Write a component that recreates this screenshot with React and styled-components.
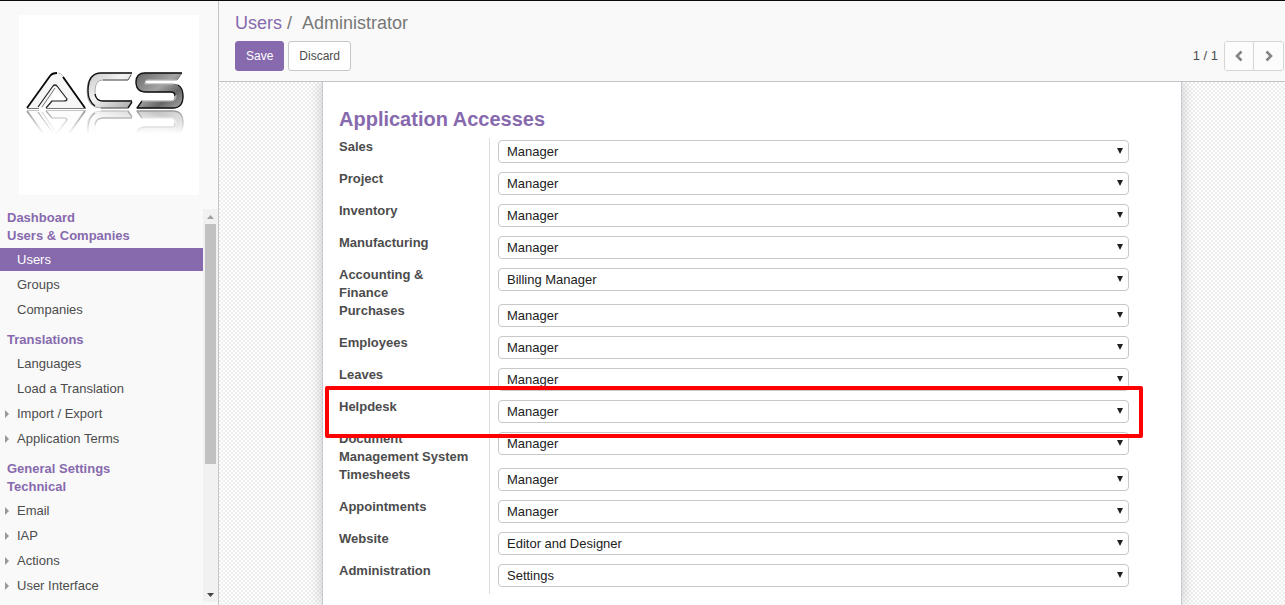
import React from "react";
import styled, { createGlobalStyle, css } from "styled-components";

const purple = "#8769ae";
const line = "#c3c3c8";

const GlobalStyle = createGlobalStyle`
  *, *::before, *::after { box-sizing: border-box; }
  body {
    margin: 0;
    font: 13px/18px "Liberation Sans", Arial, sans-serif;
    color: #4c4c4c;
    background: #fff;
  }
`;

const Page = styled.div`
  display: flex;
  height: 100vh;
  overflow: hidden;
  border-top: 1px solid #0b0b0b;
`;

const Sidebar = styled.aside`
  display: flex;
  flex-direction: column;
  flex: none;
  width: 219px;
  padding-bottom: 3px;
  background: #f9f9f9;
  border-right: 1px solid ${line};
`;

const LogoLink = styled.a`
  flex: none;
  align-self: center;
  width: 180px;
  height: 180px;
  margin: 14px 0;
  background: #fff;
`;

const MenuArea = styled.div`
  display: flex;
  flex: 1;
  min-height: 0;
`;

const Menu = styled.nav`
  flex: 1;
  overflow: hidden;
`;

const MenuTitle = styled.h2`
  margin: 0;
  padding-left: 7px;
  font-size: 13px;
  line-height: 18px;
  color: ${purple};
`;

const MenuList = styled.ul`
  display: flex;
  flex-direction: column;
  gap: 2px;
  margin: 3px 0 10px;
  padding: 0;
  list-style: none;
`;

const MenuLink = styled.a`
  display: flex;
  align-items: center;
  height: 23px;
  color: #4c4c4c;
  text-decoration: none;
  ${(p) => p.$active && css`
    color: #fff;
    background: ${purple};
  `}
`;

const Caret = styled.span`
  display: flex;
  flex: none;
  width: 17px;
  padding-left: 5px;
`;

const ScrollTrack = styled.div`
  display: flex;
  flex-direction: column;
  align-items: center;
  flex: none;
  width: 15px;
  background: #f1f1f1;
`;

const ScrollArrow = styled.span`
  display: flex;
  align-items: center;
  justify-content: center;
  flex: none;
  width: 15px;
  height: 15px;
`;

const ScrollRail = styled.div`
  flex: 1;
  width: 11px;
`;

const ScrollThumb = styled.div`
  height: 66%;
  background: #c1c1c1;
`;

const Main = styled.main`
  display: flex;
  flex-direction: column;
  flex: 1;
  min-width: 0;
`;

const ControlPanel = styled.header`
  display: flex;
  flex-direction: column;
  gap: 6px;
  flex: none;
  padding: 10px 1px 10px 16px;
  background: #f9f9f9;
  border-bottom: 1px solid ${line};
`;

const Breadcrumb = styled.nav`
  display: flex;
  gap: 5px;
  font-size: 18px;
  line-height: 24px;
  color: #777;
`;

const BreadcrumbLink = styled.a`
  color: ${purple};
  text-decoration: none;
`;

const BreadcrumbCurrent = styled.span`
  padding-left: 5px;
`;

const Toolbar = styled.div`
  display: flex;
  align-items: center;
  gap: 4px;
`;

const Button = styled.button`
  height: 30px;
  padding: 0 10px;
  font: 12px/18px "Liberation Sans", Arial, sans-serif;
  color: ${(p) => (p.$primary ? "#fff" : "#4c4c4c")};
  background: ${(p) => (p.$primary ? purple : "#fff")};
  border: 1px solid ${(p) => (p.$primary ? purple : "#c8c8c8")};
  border-radius: 3px;
`;

const Pager = styled.div`
  display: flex;
  align-items: center;
  gap: 6px;
  margin-left: auto;
`;

const PagerButtons = styled.div`
  display: flex;
  overflow: hidden;
  border: 1px solid #d6d6d6;
  border-radius: 3px;
`;

const PagerButton = styled.button`
  display: flex;
  align-items: center;
  justify-content: center;
  width: 28px;
  height: 28px;
  padding: 0;
  background: #fcfcfc;
  border: 0;

  & + & {
    width: 30px;
    border-left: 1px solid #d6d6d6;
  }
`;

const Content = styled.div`
  display: flex;
  justify-content: center;
  flex: 1;
  min-height: 0;
  overflow: hidden;
  background: conic-gradient(#ededed 25%, #fff 0 50%, #ededed 0 75%, #fff 0) 0 0 / 4px 4px;
`;

const Sheet = styled.section`
  width: 100%;
  max-width: 860px;
  padding: 24px 52px 11px 16px;
  background: #fff;
  border: 1px solid #c8c8d3;
  border-width: 0 1px;
  box-shadow: 0 0 14px rgba(0, 0, 0, 0.2);
`;

const SheetTitle = styled.h1`
  margin: 0;
  padding-bottom: 6px;
  font-size: 20px;
  line-height: 26px;
  color: ${purple};
`;

const FieldRow = styled.div`
  position: relative;
  display: flex;
  min-height: 32px;
`;

const FieldLabel = styled.label`
  flex: none;
  width: 151px;
  padding-right: 18px;
  font-weight: bold;
  border-right: 1px solid #ddd;
`;

const SelectBox = styled.div`
  position: relative;
  flex: 1;
  height: 23px;
  margin: 2px 0 0 8px;
`;

const Select = styled.select`
  display: block;
  width: 100%;
  height: 23px;
  padding: 0 24px 0 8px;
  font: 13px/18px "Liberation Sans", Arial, sans-serif;
  color: #222;
  background: #fff;
  border: 1px solid #c8c8c8;
  border-radius: 4px;
  appearance: none;
`;

const SelectArrow = styled.svg`
  position: absolute;
  top: 8px;
  right: 6px;
  pointer-events: none;
`;

const Highlight = styled.div`
  position: absolute;
  z-index: 1;
  inset: -12px -14px -8px;
  border: 4px solid #fe0000;
  border-radius: 2px;
  pointer-events: none;
`;

const sections = [
  { title: "Dashboard" },
  {
    title: "Users & Companies",
    items: [{ name: "Users", active: true }, { name: "Groups" }, { name: "Companies" }],
  },
  {
    title: "Translations",
    items: [
      { name: "Languages" },
      { name: "Load a Translation" },
      { name: "Import / Export", nested: true },
      { name: "Application Terms", nested: true },
    ],
  },
  { title: "General Settings" },
  {
    title: "Technical",
    items: [
      { name: "Email", nested: true },
      { name: "IAP", nested: true },
      { name: "Actions", nested: true },
      { name: "User Interface", nested: true },
    ],
  },
];

const fields = [
  ["Sales", "Manager"],
  ["Project", "Manager"],
  ["Inventory", "Manager"],
  ["Manufacturing", "Manager"],
  ["Accounting & Finance", "Billing Manager"],
  ["Purchases", "Manager"],
  ["Employees", "Manager"],
  ["Leaves", "Manager"],
  ["Helpdesk", "Manager"],
  ["Document Management System", "Manager"],
  ["Timesheets", "Manager"],
  ["Appointments", "Manager"],
  ["Website", "Editor and Designer"],
  ["Administration", "Settings"],
];

function Logo() {
  return (
    <svg width="180" height="180" viewBox="0 0 180 180" role="img" aria-label="ACS">
      <defs>
        <linearGradient id="silver" x1="0" y1="0" x2="1" y2="1">
          <stop offset="0" stopColor="#c4c4c4" />
          <stop offset=".45" stopColor="#f4f4f4" />
          <stop offset="1" stopColor="#a8a8a8" />
        </linearGradient>
        <linearGradient id="steel" x1="0" y1="0" x2="1" y2="1">
          <stop offset="0" stopColor="#666" />
          <stop offset=".45" stopColor="#a4a4a4" />
          <stop offset=".7" stopColor="#666" />
          <stop offset="1" stopColor="#aaa" />
        </linearGradient>
        <linearGradient id="fade" x1="0" y1="0" x2="0" y2="1">
          <stop offset="0" stopColor="#000" />
          <stop offset=".35" stopColor="#000" />
          <stop offset="1" stopColor="#777" />
        </linearGradient>
        <mask id="reflection" maskUnits="userSpaceOnUse" x="0" y="56" width="180" height="40">
          <rect y="56" width="180" height="40" fill="url(#fade)" />
        </mask>
        <g id="mark" strokeLinejoin="round">
          <path d="M9 93L31 61Q33 58 37 58Q41 58 43 61L66 93Z" fill="#f6f6f6" />
          <path d="M39 58Q42 58 44 61L65 91" fill="none" stroke="#bbb" />
          <path d="M8 93L31 61Q33 58 38 58M44 62L66 93" fill="none" stroke="#080808" strokeWidth="1.8" />
          <path d="M24 93L37 74L46 85H33L27 93Z" fill="#fff" />
          <path d="M19 92L34 71Q36 69 38 71L48 84Q48 86 45 86H33L27 93" fill="none" stroke="#222" strokeWidth="1.2" />
          <path d="M23 92L36 73" fill="none" stroke="#777" />
          <path d="M8 93.5H20M27 93.5H67" stroke="#777" />
          <path d="M113 58H82Q68 58 68 76Q68 93 82 93H109L113 86H84Q76 86 76 76Q76 65 84 65H109Z" fill="url(#silver)" stroke="#999" strokeWidth=".8" />
          <path d="M113 58H82Q69 58 69 76Q69 86 76 91M113 86H84Q77 86 76 79M109 93L113 87" fill="none" stroke="#151515" strokeWidth="1.4" />
          <path d="M82 93H109M84 65H109L112 60" fill="none" stroke="#555" strokeWidth=".9" />
          <path d="M163 58H126Q117 58 117 67Q117 77 127 77H152Q156 77 156 81Q156 86 152 86H123L118 93H154Q164 93 164 81Q164 69 154 69H129Q126 69 126 67Q126 65 129 65H158Z" fill="url(#steel)" stroke="#666" strokeWidth=".8" />
          <path d="M163 58H126Q117 58 117 67Q117 77 127 77H152Q156 77 156 81M123 86L118 93H154Q164 93 164 81Q164 73 159 70" fill="none" stroke="#151515" strokeWidth="1.3" />
          <path d="M158 65H128Q126 65 126 69H155M123 86H152Q157 86 157 80" fill="none" stroke="#ddd" strokeWidth=".8" />
        </g>
      </defs>
      <use href="#mark" />
      <g transform="translate(0 189) scale(1 -1)">
        <use href="#mark" mask="url(#reflection)" />
      </g>
    </svg>
  );
}

function Field({ label, value }) {
  const id = label.toLowerCase().replace(/[^a-z]+/g, "-");
  return (
    <FieldRow>
      <FieldLabel htmlFor={id}>{label}</FieldLabel>
      <SelectBox>
        <Select id={id} defaultValue={value}>
          <option>{value}</option>
        </Select>
        <SelectArrow width="6" height="6" viewBox="0 0 6 6" aria-hidden="true">
          <path d="M0 0H6L3 6Z" fill="#222" />
        </SelectArrow>
      </SelectBox>
      {label === "Helpdesk" && <Highlight />}
    </FieldRow>
  );
}

export default function App() {
  return (
    <Page>
      <GlobalStyle />
      <Sidebar>
        <LogoLink href="#home"><Logo /></LogoLink>
        <MenuArea>
          <Menu aria-label="Settings">
            {sections.map((section) => (
              <React.Fragment key={section.title}>
                <MenuTitle>{section.title}</MenuTitle>
                {section.items && (
                  <MenuList>
                    {section.items.map((item) => (
                      <li key={item.name}>
                        <MenuLink href="#menu" $active={item.active}>
                          <Caret>
                            {item.nested && (
                              <svg width="4" height="8" viewBox="0 0 4 8" aria-hidden="true">
                                <path d="M0 0L4 4L0 8Z" fill="#999" />
                              </svg>
                            )}
                          </Caret>
                          {item.name}
                        </MenuLink>
                      </li>
                    ))}
                  </MenuList>
                )}
              </React.Fragment>
            ))}
          </Menu>
          <ScrollTrack aria-hidden="true">
            <ScrollArrow>
              <svg width="7" height="4" viewBox="0 0 7 4"><path d="M0 4L3.5 0L7 4Z" fill="#a0a0a0" /></svg>
            </ScrollArrow>
            <ScrollRail><ScrollThumb /></ScrollRail>
            <ScrollArrow>
              <svg width="7" height="4" viewBox="0 0 7 4"><path d="M0 0L3.5 4L7 0Z" fill="#444" /></svg>
            </ScrollArrow>
          </ScrollTrack>
        </MenuArea>
      </Sidebar>
      <Main>
        <ControlPanel>
          <Breadcrumb aria-label="Breadcrumb">
            <BreadcrumbLink href="#users">Users</BreadcrumbLink>
            <span>/</span>
            <BreadcrumbCurrent>Administrator</BreadcrumbCurrent>
          </Breadcrumb>
          <Toolbar>
            <Button type="button" $primary>Save</Button>
            <Button type="button">Discard</Button>
            <Pager>
              <span>1 / 1</span>
              <PagerButtons>
                <PagerButton type="button" aria-label="Previous">
                  <svg width="8" height="12" viewBox="0 0 8 12"><path d="M6.5 1.5L2 6L6.5 10.5" fill="none" stroke="#848484" strokeWidth="2.6" /></svg>
                </PagerButton>
                <PagerButton type="button" aria-label="Next">
                  <svg width="8" height="12" viewBox="0 0 8 12"><path d="M1.5 1.5L6 6L1.5 10.5" fill="none" stroke="#848484" strokeWidth="2.6" /></svg>
                </PagerButton>
              </PagerButtons>
            </Pager>
          </Toolbar>
        </ControlPanel>
        <Content>
          <Sheet>
            <SheetTitle>Application Accesses</SheetTitle>
            {fields.map(([label, value]) => (
              <Field key={label} label={label} value={value} />
            ))}
          </Sheet>
        </Content>
      </Main>
    </Page>
  );
}
